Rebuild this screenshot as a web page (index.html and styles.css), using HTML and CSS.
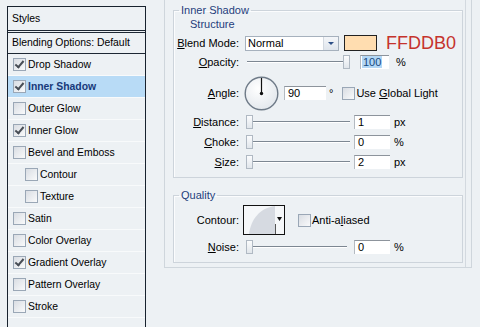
FILE: index.html
```html
<!DOCTYPE html>
<html lang="en">
<head>
  <meta charset="UTF-8">
  <meta name="viewport" content="width=device-width, initial-scale=1.0">
  <title>Layer Style - Inner Shadow</title>
  <link rel="stylesheet" href="styles.css">
</head>
<body>
  <div class="dialog">
    <!-- Liste des styles -->
    <aside class="styles">
      <div class="styles-head">Styles</div>
      <div class="styles-blend">Blending Options: Default</div>
      <ul class="style-list">
        <li><span class="check on"></span>Drop Shadow</li>
        <li class="active"><span class="check on"></span>Inner Shadow</li>
        <li><span class="check"></span>Outer Glow</li>
        <li><span class="check on"></span>Inner Glow</li>
        <li><span class="check"></span>Bevel and Emboss</li>
        <li class="sub"><span class="check"></span>Contour</li>
        <li class="sub"><span class="check"></span>Texture</li>
        <li><span class="check"></span>Satin</li>
        <li><span class="check"></span>Color Overlay</li>
        <li><span class="check on"></span>Gradient Overlay</li>
        <li><span class="check"></span>Pattern Overlay</li>
        <li><span class="check"></span>Stroke</li>
      </ul>
    </aside>

    <!-- Réglages -->
    <main class="frame">
      <fieldset class="group group-structure">
        <legend>Inner Shadow</legend>
        <div class="subtitle">Structure</div>

        <div class="row row-blend">
          <label class="lbl"><u>B</u>lend Mode:</label>
          <div class="select"><span>Normal</span><span class="select-btn"></span></div>
          <span class="swatch"></span>
          <span class="hex">FFDDB0</span>
        </div>

        <div class="row row-opacity">
          <label class="lbl"><u>O</u>pacity:</label>
          <div class="slider"><span class="thumb" style="left: 98px"></span></div>
          <span class="field field-sm"><span class="sel">100</span></span>
          <span class="unit unit-wide">%</span>
        </div>

        <div class="row row-angle">
          <label class="lbl"><u>A</u>ngle:</label>
          <svg class="dial" width="35" height="35" viewBox="0 0 35 35">
            <defs>
              <radialGradient id="dialFill" cx="40%" cy="35%" r="70%">
                <stop offset="0" stop-color="#ffffff"/>
                <stop offset="1" stop-color="#e2e7ec"/>
              </radialGradient>
            </defs>
            <circle cx="17.5" cy="17.5" r="16.3" fill="url(#dialFill)" stroke="#6f7b88" stroke-width="1.4"/>
            <line x1="17.5" y1="17.5" x2="17.5" y2="2" stroke="#111" stroke-width="1.2"/>
            <circle cx="17.5" cy="17.5" r="1.7" fill="#111"/>
          </svg>
          <span class="field field-angle">90</span>
          <span class="deg">°</span>
          <span class="check check-global"></span>
          <span>Use <u>G</u>lobal Light</span>
        </div>

        <div class="row row-distance">
          <label class="lbl"><u>D</u>istance:</label>
          <div class="slider"><span class="thumb"></span></div>
          <span class="field">1</span>
          <span class="unit">px</span>
        </div>

        <div class="row row-choke">
          <label class="lbl"><u>C</u>hoke:</label>
          <div class="slider"><span class="thumb"></span></div>
          <span class="field">0</span>
          <span class="unit">%</span>
        </div>

        <div class="row row-size">
          <label class="lbl"><u>S</u>ize:</label>
          <div class="slider"><span class="thumb"></span></div>
          <span class="field">2</span>
          <span class="unit">px</span>
        </div>
      </fieldset>

      <fieldset class="group group-quality">
        <legend>Quality</legend>

        <div class="row row-contour">
          <label class="lbl">Contour:</label>
          <svg class="contour" width="42" height="30" viewBox="0 0 42 30">
            <rect x="0.5" y="0.5" width="41" height="29" fill="#f5f7f9" stroke="#111"/>
            <path d="M6 29 C8 14 17 3 32 1 L32 29 Z" fill="#d6dae1"/>
            <line x1="32.5" y1="19" x2="32.5" y2="29" stroke="#555"/>
            <path d="M34 12 L39 12 L36.5 16 Z" fill="#111"/>
          </svg>
          <span class="check check-aa"></span>
          <span>Anti-a<u>l</u>iased</span>
        </div>

        <div class="row row-noise">
          <label class="lbl"><u>N</u>oise:</label>
          <div class="slider slider-short"><span class="thumb"></span></div>
          <span class="field field-noise">0</span>
          <span class="unit">%</span>
        </div>
      </fieldset>
    </main>
  </div>
</body>
</html>
```

FILE: styles.css
```css
/* Boîte de dialogue façon Photoshop (thème Windows XP) */
body {
  font-family: "Liberation Sans", Arial, sans-serif;
  font-size: 11px;
  color: #000;
  background-color: #edf1f4;
  margin: 0;
  padding: 0;
  overflow: hidden;
}
.dialog {
  display: flex;
  align-items: flex-start;
  height: 327px;
}

/* Colonne de gauche */
.styles {
  margin: 6px 0 0 7px;
  width: 137px;
  height: 330px;
  border: 1px solid #18222e;
  border-bottom: none;
  font-size: 10.4px;
}
.styles-head {
  height: 23px;
  line-height: 23px;
  padding-left: 4px;
  border-bottom: 1px solid #1d2733;
}
.styles-blend {
  margin-top: 1px;
  height: 20px;
  line-height: 20px;
  padding-left: 4px;
  border-top: 1px solid #1d2733;
  border-bottom: 1px solid #1d2733;
}
.style-list {
  list-style-type: none;
  margin: 0;
  padding: 0;
}
.style-list li {
  display: flex;
  align-items: center;
  height: 21px;
  padding-left: 5px;
  border-bottom: 1px solid #f8fafb;
}
.style-list li.sub {
  padding-left: 17px;
}
.style-list li.active {
  background-color: #b8dbf6;
  color: #17397a;
  font-weight: bold;
}
.check {
  position: relative;
  flex: none;
  width: 11px;
  height: 11px;
  margin-right: 2px;
  border: 1px solid #9aa7b6;
  background: linear-gradient(135deg, #d9dde3, #f9fafb);
}
.check.on::after {
  content: "";
  position: absolute;
  left: 3px;
  top: 0px;
  width: 3px;
  height: 7px;
  border-right: 2px solid #474d55;
  border-bottom: 2px solid #474d55;
  transform: rotate(40deg);
}

/* Zone de droite */
.frame {
  margin-left: 18px;
  width: 290px;
  padding: 4px 8px 4px 8px;
  border-left: 1px solid #cfd6dc;
  border-right: 1px solid #cfd6dc;
  border-bottom: 1px solid #cfd6dc;
  box-shadow: inset -5px 0 0 #edf1f4, inset -6px 0 0 #d3d9df;
}
.group {
  margin: 0;
  padding: 0;
  border: 1px solid #cdd4db;
  box-shadow: inset 1px 1px 0 #fbfcfd;
}
.group legend {
  margin-left: 5px;
  padding: 0 2px;
  line-height: 13px;
  color: #1f3e7c;
}
.group-structure {
  padding-bottom: 6px;
}
.group-quality {
  margin-top: 11px;
  padding-bottom: 6px;
}
.subtitle {
  padding-left: 16px;
  height: 15px;
  line-height: 14px;
  color: #1f3e7c;
}
.row {
  display: flex;
  align-items: center;
  height: 18px;
}
.row-blend { margin-top: 2px; }
.row-opacity { margin-top: 1px; }
.row-angle { margin-top: 3px; height: 38px; }
.row-distance { margin-top: 1px; }
.row-choke, .row-size { margin-top: 2px; }
.row-contour { margin-top: 3px; height: 30px; }
.row-noise { margin-top: 3px; }

.lbl {
  width: 65px;
  margin-right: 6px;
  text-align: right;
  flex: none;
}

/* Contrôles */
.select {
  display: flex;
  align-items: center;
  justify-content: space-between;
  width: 90px;
  height: 13px;
  padding-left: 2px;
  border: 1px solid #a6b1bd;
  background-color: #fff;
}
.select-btn {
  position: relative;
  width: 14px;
  height: 13px;
  background: linear-gradient(#f4f6f9, #dfe5ec);
  border-left: 1px solid #d3d9e0;
}
.select-btn::after {
  content: "";
  position: absolute;
  left: 4px;
  top: 5px;
  border-left: 3px solid transparent;
  border-right: 3px solid transparent;
  border-top: 3px solid #2d4f86;
}
.swatch {
  width: 31px;
  height: 14px;
  margin-left: 5px;
  border: 1px solid #222;
  background-color: #ffddb0;
}
.hex {
  margin-left: 9px;
  font-size: 18px;
  line-height: 18px;
  color: #c5332c;
}
.slider {
  position: relative;
  width: 105px;
  height: 14px;
  flex: none;
}
.slider::before {
  content: "";
  position: absolute;
  left: 2px;
  right: 0;
  top: 6px;
  height: 1px;
  background-color: #7d8792;
  border-bottom: 1px solid #fff;
}
.slider-short {
  width: 102px;
}
.thumb {
  position: absolute;
  left: 1px;
  top: 0;
  width: 5px;
  height: 12px;
  border: 1px solid #b0b9c3;
  background: linear-gradient(#fbfcfd, #e1e6eb);
}
.field {
  width: 32px;
  height: 13px;
  line-height: 13px;
  margin-left: 4px;
  padding-left: 3px;
  border-top: 1px solid #8d949c;
  border-left: 1px solid #b4bac1;
  background-color: #fff;
  flex: none;
}
.field-sm {
  width: 27px;
  margin-left: 10px;
  padding-left: 1px;
}
.field-noise {
  margin-left: 7px;
}
.field-angle {
  width: 38px;
  margin-left: 5px;
}
.sel {
  background-color: #b3d7f5;
  color: #17497f;
  padding: 0 1px;
}
.unit {
  margin-left: 4px;
}
.unit-wide {
  margin-left: 7px;
}
.dial {
  margin-left: -1px;
  flex: none;
}
.deg {
  margin-left: 3px;
  align-self: flex-start;
  margin-top: 13px;
}
.check-global {
  margin-left: 9px;
  margin-right: 1px;
}
.contour {
  margin-left: -2px;
  flex: none;
}
.check-aa {
  margin-left: 13px;
  margin-right: 1px;
}
```
